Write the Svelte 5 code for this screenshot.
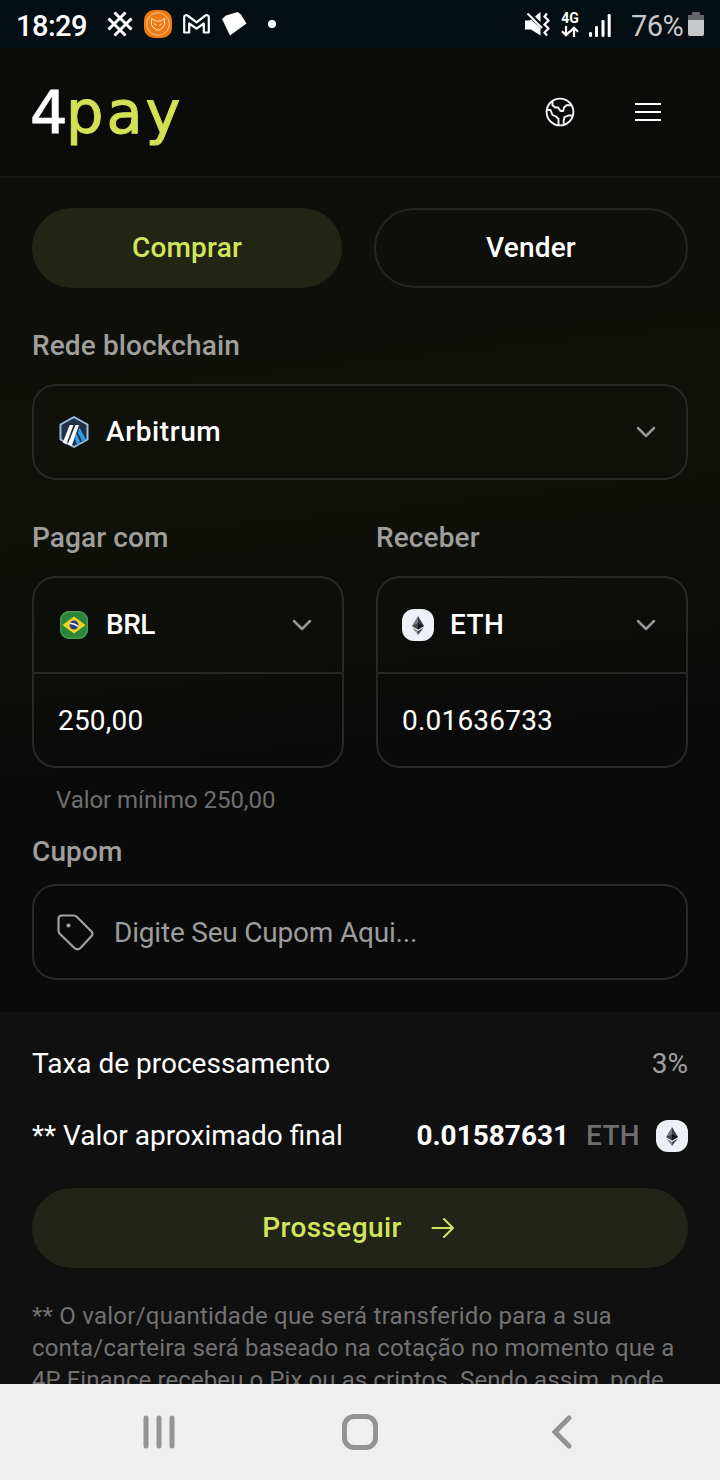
<script>
  const note = [
    '** O valor/quantidade que será transferido para a sua',
    'conta/carteira será baseado na cotação no momento que a',
    '4P Finance recebeu o Pix ou as criptos. Sendo assim, pode',
  ];
</script>

{#snippet chevron()}
  <svg class="chevron" width="20" height="12" viewBox="0 0 20 12" fill="none" stroke="#949494" stroke-width="2.5" stroke-linecap="round" stroke-linejoin="round">
    <path d="M2 2l8 8 8-8" />
  </svg>
{/snippet}

{#snippet eth()}
  <svg class="coin" width="32" height="32" viewBox="0 0 32 32">
    <rect width="32" height="32" rx="12" fill="#edf1f7" />
    <path d="M16 7l-6 10 6 3.5z" fill="#77777b" />
    <path d="M16 7l6 10-6 3.5z" fill="#3c3c3f" />
    <path d="M10 17l6-2.7v6.2z" fill="#444448" />
    <path d="M22 17l-6-2.7v6.2z" fill="#161619" />
    <path d="M10.3 18.5l5.7 3.4V26z" fill="#858588" />
    <path d="M21.7 18.5L16 21.900V26z" fill="#424246" />
  </svg>
{/snippet}

<div class="screen">
  <div class="status">
    <span class="time">18:29</span>
    <svg class="s-binance" width="26" height="26" viewBox="0 0 26 26" fill="none" stroke="#fff" stroke-width="3">
      <path d="M7.500 1.500L13 7l5.500-5.500M7.500 24.500L13 19l5.500 5.500M1.500 7.500L18.500 24.500M24.500 7.500L7.500 24.500M1.500 18.500L18.500 1.500M24.500 18.500L7.500 1.500" />
    </svg>
    <svg class="s-fox" width="28" height="28" viewBox="0 0 28 28" fill="none">
      <rect width="28" height="28" rx="10" fill="#f07a12" />
      <circle cx="14" cy="14" r="11.300" stroke="#ffd099" stroke-width=".9" />
      <path d="M7.500 8.500l4 2.500h5l4-2.500v6l-2 3.500-4.500 2.500L9.500 18l-2-3.500zM10 13.500l3 2M18 13.500l-3 2" stroke="#ffe6c8" stroke-width="1" />
    </svg>
    <svg class="s-mail" width="27" height="20" viewBox="0 0 27 20" fill="none" stroke="#fff" stroke-width="2.200" stroke-linejoin="round">
      <path d="M1.200 18.500V3c0-2 2.300-2.400 4-1l8.300 6.300L21.800 2c1.700-1.400 4-1 4 1v15.500h-5V9.500l-7.300 5.200-7.300-5.200v9z" />
    </svg>
    <svg class="s-gem" width="25" height="24" viewBox="0 0 25 24">
      <path d="M4 3.500L15.500 0 19 2.500 24.500 11.500 8 23.500 0 7z" fill="#fff" />
    </svg>
    <i class="dot"></i>
    <span class="grow"></span>
    <svg class="s-mute" width="25" height="25" viewBox="0 0 25 25" fill="none">
      <path d="M0 8.500h4l2-1 9.500 8.500v7.500L6 17.500H0zM10 4.500L15.500 0v10z" fill="#fff" />
      <path d="M2.500 1.500L17 16" stroke="#fff" stroke-width="2" />
      <path d="M22 1.500l-2.500 3 4 4-4 4 4 4-4 4 2.500 3" stroke="#fff" stroke-width="2.200" />
    </svg>
    <div class="net">
      <span>4G</span>
      <svg width="18" height="11" viewBox="0 0 18 11" fill="none" stroke="#fff" stroke-width="2.200">
        <path d="M5 0v9M1 5.200l4 4 4-4M13 11V2M9 5.800l4-4 4 4" />
      </svg>
    </div>
    <svg class="s-signal" width="22" height="23" viewBox="0 0 22 23" fill="#fff">
      <rect x="0" y="18" width="3" height="5" rx="1.200" /><rect x="6" y="12" width="3" height="11" rx="1.200" /><rect x="12.500" y="6" width="3" height="17" rx="1.200" /><rect x="18.700" y="0" width="3" height="23" rx="1.200" />
    </svg>
    <span class="pct">76%</span>
    <svg class="s-batt" width="16" height="24" viewBox="0 0 16 24">
      <path d="M4 0h8v3h4v5H0V3h4z" fill="#626668" />
      <path d="M0 8h16v14q0 2-2 2H2q-2 0-2-2z" fill="#c7c8c9" />
    </svg>
  </div>

  <header>
    <div class="logo"><span>4</span><b>pay</b></div>
    <svg class="globe" width="30" height="30" viewBox="0 0 30 30" fill="none" stroke="#f2f2f2" stroke-width="1.900" stroke-linejoin="round">
      <circle cx="15" cy="15" r="13.400" />
      <path d="M7.500 4v4.200l2.700 2.300h3l1.500 2.500 1 1h2.500l.8-3.500 2.500-2.300h5M2 13h3.500l2 5 3.500 1.500 2.500 2.500v6.300M27.500 18.500h-4l-4 1.700-.8 3v4.300" />
    </svg>
    <svg class="burger" width="26" height="20" viewBox="0 0 26 20" fill="none" stroke="#fff" stroke-width="2">
      <path d="M0 2h26M0 10h26M0 18h26" />
    </svg>
  </header>

  <main>
    <div class="tabs">
      <button class="tab active">Comprar</button>
      <button class="tab outline">Vender</button>
    </div>

    <div class="label net-label">Rede blockchain</div>
    <div class="field">
      <svg class="arb" width="30" height="32" viewBox="0 0 30 32">
        <path d="M15 1L28.500 8.500v15L15 31 1.500 23.500v-15z" fill="#213147" stroke="#9dbfdd" stroke-width="2" stroke-linejoin="round" />
        <path d="M10.800 9h3.700L7.200 28.500l-3.500-2zM16.500 9h3.500l-7.300 21-4-1.500z" fill="#fff" />
        <path d="M18.700 16.500l2-5L27 24l-3.300 2zM15.500 22l2-4.500 4.200 9.500-3.700 2z" fill="#2b9ee9" />
      </svg>
      <span class="name wide">Arbitrum</span>
      {@render chevron()}
    </div>

    <div class="pair">
      <div>
        <div class="label">Pagar com</div>
        <div class="box">
          <div class="coinrow">
            <svg class="flag" width="28" height="28" viewBox="0 0 28 28">
              <rect width="28" height="28" rx="9" fill="#29863a" />
              <rect x=".75" y=".75" width="26.500" height="26.500" rx="8.500" fill="none" stroke="#48994f" stroke-width="1.500" />
              <path d="M14 5.500L25.500 14 14 22.500 2.500 14z" fill="#f4d321" />
              <circle cx="14" cy="14" r="4.500" fill="#263f80" />
              <path d="M9.900 12.500q4.500-.5 8.200 3" fill="none" stroke="#fff" stroke-width="1.400" />
            </svg>
            <span class="name tight">BRL</span>
            {@render chevron()}
          </div>
          <div class="amount">250,00</div>
        </div>
      </div>
      <div>
        <div class="label">Receber</div>
        <div class="box">
          <div class="coinrow">
            {@render eth()}
            <span class="name">ETH</span>
            {@render chevron()}
          </div>
          <div class="amount">0.01636733</div>
        </div>
      </div>
    </div>
    <div class="hint">Valor mínimo 250,00</div>

    <div class="label coupon-label">Cupom</div>
    <div class="field">
      <svg class="tag" width="37" height="37" viewBox="0 0 37 37" fill="none">
        <path d="M1.500 5Q1.500 1.500 5 1.500H16.500Q18.500 1.500 20 3L34.500 17.500Q36.500 20 34.500 22L23.500 34Q20.500 36.500 17.500 34L3 20Q1.500 18.500 1.500 16.500z" stroke="#a0a0a0" stroke-width="2.200" />
        <circle cx="11.500" cy="11.500" r="2.100" fill="#a0a0a0" />
      </svg>
      <span class="placeholder">Digite Seu Cupom Aqui...</span>
    </div>
  </main>

  <section>
    <div class="row"><span>Taxa de processamento</span><span class="fee">3%</span></div>
    <div class="row final">
      <span>** Valor aproximado final</span>
      <div class="total"><strong>0.01587631</strong><em>ETH</em>{@render eth()}</div>
    </div>
    <button class="go">
      Prosseguir
      <svg width="24" height="22" viewBox="0 0 24 22" fill="none" stroke="#d1e45c" stroke-width="2" stroke-linecap="round" stroke-linejoin="round">
        <path d="M1.500 11h20M13 2l9 9-9 9" />
      </svg>
    </button>
    <p>{#each note as line}<span>{line}</span>{/each}</p>
  </section>

  <nav>
    <svg width="32" height="34" viewBox="0 0 32 34" stroke="#949494" stroke-width="5" stroke-linecap="round"><path d="M3 3v28M16 3v28M29 3v28" /></svg>
    <svg width="36" height="36" viewBox="0 0 36 36" fill="none" stroke="#949494" stroke-width="5"><rect x="2.500" y="2.500" width="31" height="31" rx="9.500" /></svg>
    <svg width="20" height="34" viewBox="0 0 20 34" fill="none" stroke="#949494" stroke-width="5" stroke-linecap="round"><path d="M17 3L3 17l14 14" /></svg>
  </nav>
</div>

<style>
  :global(body) { background: #0a0a0a; }
  .screen {
    width: 720px; height: 1480px; overflow: hidden; display: flex; flex-direction: column;
    font: 400 28px/40px Roboto, sans-serif; letter-spacing: 0.2px; color: #fff;
    box-sizing: border-box;
  }
  svg { display: block; flex: none; }
  button { font: inherit; letter-spacing: inherit; border: 0; padding: 0; }
  .status { height: 48px; flex: none; background: #050e12; display: flex; align-items: center; padding: 0 16px; box-sizing: border-box; }
  .time { width: 91px; font-weight: 500; font-size: 29px; letter-spacing: -0.500px; padding-top: 3px; }
  .s-fox { margin-left: 11px; }
  .s-mail { margin-left: 11px; }
  .s-gem { margin-left: 12px; }
  .dot { width: 8px; height: 8px; border-radius: 50%; background: #fff; margin-left: 21px; }
  .grow { flex: 1; }
  .net { width: 20px; margin-left: 10px; display: flex; flex-direction: column; align-items: center; gap: 1px; }
  .net span { font-size: 14px; line-height: 14px; font-weight: 700; letter-spacing: 0; }
  .s-signal { margin-left: 9px; margin-top: 2px; }
  .pct { margin-left: 20px; color: #c7c8c9; width: 57px; font-size: 29px; letter-spacing: -0.500px; padding-top: 3px; }
  header { height: 130px; flex: none; box-sizing: border-box; border-bottom: 2px solid #171712; background: #0b0b09; display: flex; align-items: center; padding: 0 59px 0 30px; }
  .logo { flex: 1; font: 400 59px/60px "DejaVu Sans", sans-serif; padding-top: 1px; display: flex; -webkit-text-stroke: 1px currentColor; }
  .logo span { width: 36px; color: #fff; letter-spacing: 0; }
  .logo b { font-weight: 400; color: #d2e254; letter-spacing: 3px; }
  .globe { margin-right: 60px; }
  main { height: 834px; flex: none; box-sizing: border-box; padding: 30px 32px 0; background: linear-gradient(174deg, #0e0f0b 0%, #10110a 38%, #0a0a0a 66%); }
  .tabs { display: grid; grid-template-columns: 310px 314px; gap: 32px; }
  .tab { height: 80px; border-radius: 40px; font-weight: 500; }
  .active { background: #222414; color: #d1e45c; }
  .outline { background: transparent; border: 2px solid #252523; color: #fff; }
  .label { font-weight: 500; color: #a09f9c; margin-bottom: 18px; letter-spacing: 0.120px; }
  .net-label { margin-top: 38px; }
  .field { height: 96px; box-sizing: border-box; border: 2px solid #282826; border-radius: 24px; padding: 0 30px 0 24px; display: flex; align-items: center; }
  .arb { margin: 0 17px 0 1px; }
  .name { flex: 1; font-weight: 500; letter-spacing: 0.400px; }
  .wide { letter-spacing: 0.600px; }
  .tight { letter-spacing: -0.500px; }
  .pair { display: grid; grid-template-columns: 312px 312px; gap: 32px; margin-top: 38px; }
  .box { height: 192px; box-sizing: border-box; border: 2px solid #282826; border-radius: 24px; }
  .coinrow { height: 94px; border-bottom: 2px solid #282826; display: flex; align-items: center; padding: 0 30px 0 24px; }
  .flag { margin: 0 18px 0 2px; }
  .coinrow .coin { margin-right: 16px; }
  .amount { height: 94px; line-height: 94px; padding-left: 24px; letter-spacing: 0.200px; }
  .hint { margin: 16px 0 0 24px; font-size: 24px; line-height: 32px; color: #6e6e6e; letter-spacing: -0.050px; }
  .coupon-label { margin: 16px 0 12px; }
  .tag { margin: 0 20px 0 -1px; }
  .placeholder { color: #9c9c9c; letter-spacing: -0.200px; padding-top: 2px; }
  section { height: 372px; flex: none; overflow: hidden; box-sizing: border-box; background: #101010; padding: 32px 32px 0; }
  .row { display: flex; justify-content: space-between; align-items: center; height: 40px; letter-spacing: 0; }
  .final { margin-top: 32px; }
  .fee { color: #a0a0a0; }
  .total { display: flex; align-items: center; }
  .total strong { font-weight: 700; }
  .total em { font-style: normal; font-weight: 500; color: #6e6e6e; margin: 0 16px 0 17px; letter-spacing: 0.300px; }
  .go { width: 100%; height: 80px; margin-top: 32px; border-radius: 40px; background: #222417; color: #d1e45c; font-weight: 500; display: flex; align-items: center; justify-content: center; gap: 29px; letter-spacing: 0.400px; padding-right: 3px; }
  p { margin: 32px 0 0; font-size: 24px; line-height: 32px; color: #727272; }
  p span { display: block; white-space: nowrap; letter-spacing: 0.180px; }
  p span:first-child { letter-spacing: 0.240px; }
  p span:last-child { letter-spacing: 0.090px; }
  nav { height: 96px; flex: none; background: #efefef; display: grid; grid-template-columns: 202px 202px 202px; justify-content: center; justify-items: center; align-items: center; }
  nav svg:first-child { margin-left: 2px; }
</style>
